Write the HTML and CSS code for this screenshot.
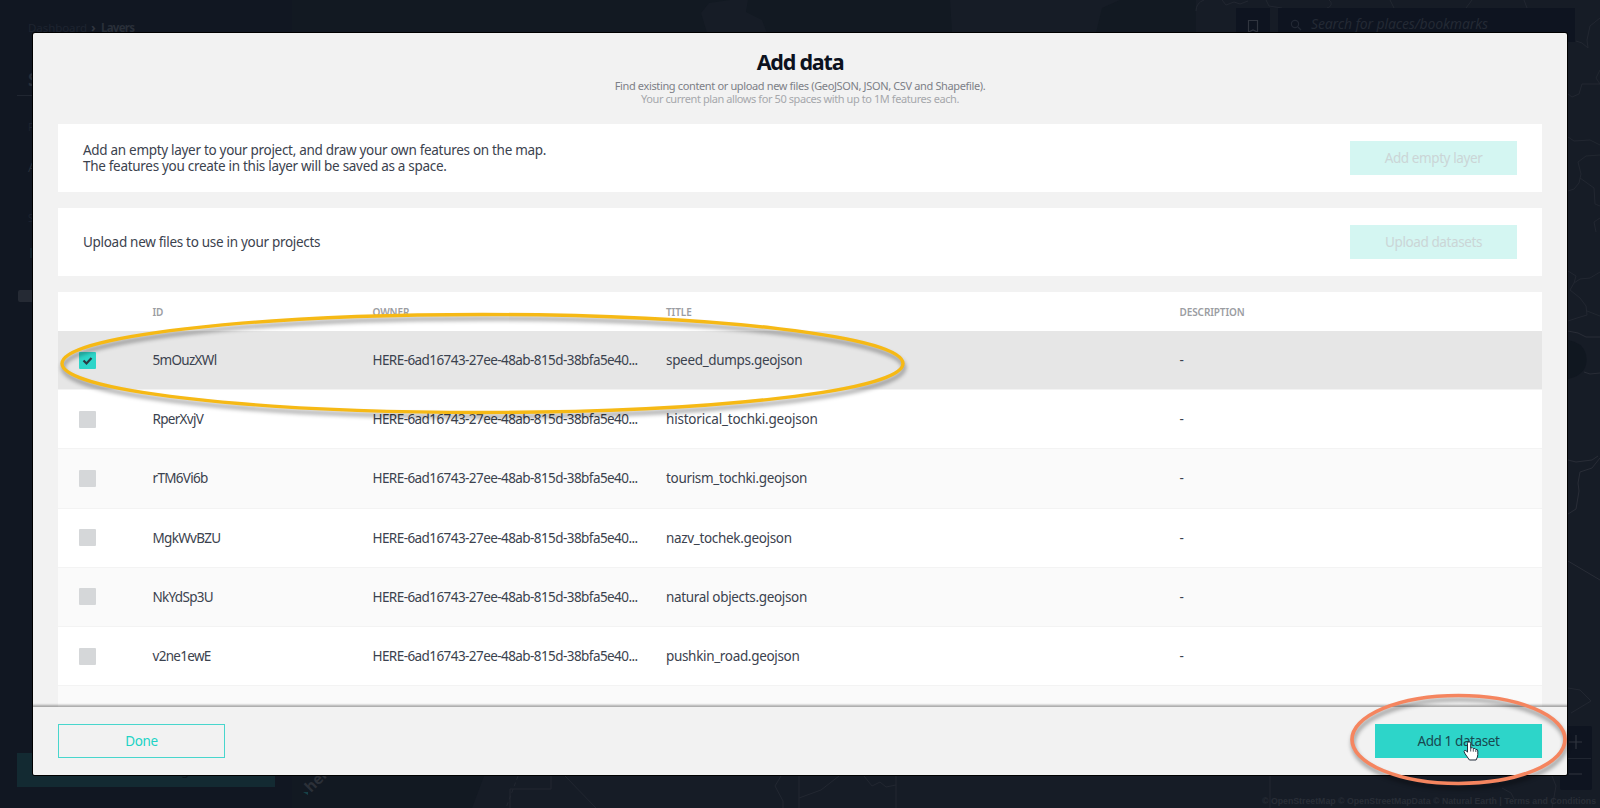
FILE: index.html
```html
<!DOCTYPE html>
<html lang="en">
<head>
<meta charset="utf-8">
<title>Add data</title>
<link rel="stylesheet" href="styles.css">
</head>
<body>
<div class="backdrop">
  <svg class="map" width="1600" height="808" viewBox="0 0 1600 808">
    <rect width="292" height="808" fill="#111722"/>
    <rect x="292" width="1308" height="808" fill="#121922"/>
    <path d="M730 0h18l-2 12 16 8 5 13h-60l-6-20 8-10zM950 0h170l-18 8-6 25H952zM1196 0h404v808H472l12-32h700V33h12z" fill="#161c26"/>
    <path d="M1568 340q14 2 18 14 4 20-18 25z" fill="#101720"/>
    <g fill="none" stroke="#222731" stroke-width="1">
      <path d="M1196 11q0-8 8-11M1222 0l4 5 8-3 6 2 8-3M1266 0l3 6 13 2M1329 0c4 3 2 7-2 8M1390 0l4 8M1472 0l-6 8M1524 0l3 8M1600 18l-10 8-3 14 1 8-6-5-6-2M1600 84l-18 0-3 10-7 3-4-3M1600 70l-4 8 4 6M1568 137l6 4 16-1 10 5M1600 155l-14 1-8 6 3 12-2 9-5 6-6 2M1580 178l14 10 1 16 5 2M1600 218l-6 4 2 10M1568 271l8 5-2 7 6-4 10-1 10-6M1574 283l-4 7 10 8 6 8 1 9-10 3-9 3M1587 311l13 5M1368 664l32 22"/>
      <path stroke="#292d37" d="M1568 331l10 2 8 4 14 0M1584 372l6 2 10-1M1568 460l8 2 16-2 6-4M1600 458l-8 10-12 4-2 11 1 8-3 18-8 5M1568 561l32 19"/>
      <path d="M1568 688l12 2 11 11-20 12M1270 776v32M1502 788l9 5 3 6M1552 776l4 10-4 22"/>
      <path d="M551 776v13h-41v19M565 776l31 32M781 776l-6 10 8 15v7M799 776v32M799 798l22-8 18-14M864 776l8 10 8-4 6 5 10-2M896 776v32"/>
      <path d="M518 776l-12 32" stroke-dasharray="4 3"/>
    </g>
    <g fill="#0e1420"><rect x="1236" y="8" width="34" height="34"/><rect x="1278" y="8" width="297" height="34"/><rect x="1560" y="726" width="32" height="64" rx="2"/></g>
    <g fill="none" stroke="#30353f" stroke-width="1.2"><path d="M1248.500 32V20.500h9V32l-4.500-2z"/><circle cx="1295" cy="24" r="3.600" stroke="#222834"/><path d="M1298 27l3 3" stroke="#222834"/><path d="M1569 742h13M1576 735v14M1569 774h13"/></g>
    <path d="M17 95.500h16M1562 758.500h29" stroke="#202631"/>
    <rect x="17" y="753" width="258" height="34" fill="#132a32"/>
    <path d="M20 290h14v13l-3-1H20q-2 0-2-2v-8q0-2 2-2z" fill="#252a34"/>
    <path d="M31 248v10" stroke="#17303a"/>
    <g class="map-text">
      <text x="28" y="32" font-size="11.500" textLength="59" fill="#1e2430">Dashboard</text>
      <text x="91" y="32" font-size="13" font-weight="700" fill="#30353f">›</text>
      <text x="101" y="32" font-size="11.500" font-weight="700" textLength="34" fill="#292f39">Layers</text>
      <text x="28" y="86" font-size="17" font-weight="700" fill="#292f39">S</text>
      <text x="28" y="131" font-size="10" fill="#1e2430">F</text>
      <text x="28" y="172" font-size="13" fill="#292f39">A</text>
      <text x="28" y="222" font-size="10" fill="#1e2430">S</text>
      <text x="1311" y="29" font-size="14" font-style="italic" textLength="177" fill="#232934">Search for places/bookmarks</text>
      <text x="181" y="775" font-size="13" fill="#0d1a23">g</text>
      <text transform="translate(311 793) rotate(-45)" font-size="15" font-weight="700" fill="#2b3038">here</text>
      <path d="M303 792h5v3z" fill="#174148"/>
      <text class="credits" x="1262" y="804" textLength="334" lengthAdjust="spacingAndGlyphs" font-size="9" fill="#292e37">© OpenStreetMap © OpenStreetMapData © Natural Earth | Terms and Conditions</text>
    </g>
  </svg>
  <main class="dialog">
    <header class="dialog-head">
      <h1>Add data</h1>
      <p class="lead">Find existing content or upload new files (GeoJSON, JSON, CSV and Shapefile).</p>
      <p class="plan">Your current plan allows for 50 spaces with up to 1M features each.</p>
    </header>
    <div class="content">
      <section class="card">
        <p>Add an empty layer to your project, and draw your own features on the map.<br>The features you create in this layer will be saved as a space.</p>
        <button class="btn muted">Add empty layer</button>
      </section>
      <section class="card">
        <p>Upload new files to use in your projects</p>
        <button class="btn muted">Upload datasets</button>
      </section>
      <section class="table">
        <div class="row head"><span></span><span>ID</span><span>OWNER</span><span>TITLE</span><span>DESCRIPTION</span></div>
        <div class="row selected"><span class="check on"><svg width="17" height="17" viewBox="0 0 17 17"><path d="M4.500 8.500l3 3 5-5.500" fill="none" stroke="#2b3a43" stroke-width="2.200"/></svg></span><span class="id">5mOuzXWl</span><span class="owner">HERE-6ad16743-27ee-48ab-815d-38bfa5e40...</span><span>speed_dumps.geojson</span><span>-</span></div>
        <div class="row"><span class="check"></span><span class="id">RperXvjV</span><span class="owner">HERE-6ad16743-27ee-48ab-815d-38bfa5e40...</span><span class="wide">historical_tochki.geojson</span><span>-</span></div>
        <div class="row alt"><span class="check"></span><span class="id">rTM6Vi6b</span><span class="owner">HERE-6ad16743-27ee-48ab-815d-38bfa5e40...</span><span>tourism_tochki.geojson</span><span>-</span></div>
        <div class="row"><span class="check"></span><span class="id">MgkWvBZU</span><span class="owner">HERE-6ad16743-27ee-48ab-815d-38bfa5e40...</span><span>nazv_tochek.geojson</span><span>-</span></div>
        <div class="row alt"><span class="check"></span><span class="id">NkYdSp3U</span><span class="owner">HERE-6ad16743-27ee-48ab-815d-38bfa5e40...</span><span>natural objects.geojson</span><span>-</span></div>
        <div class="row"><span class="check"></span><span class="id">v2ne1ewE</span><span class="owner">HERE-6ad16743-27ee-48ab-815d-38bfa5e40...</span><span>pushkin_road.geojson</span><span>-</span></div>
        <div class="row alt"></div>
      </section>
    </div>
    <footer class="dialog-foot">
      <button class="btn outline">Done</button>
      <button class="btn primary">Add 1 dataset</button>
    </footer>
  </main>
  <svg class="marks" width="1600" height="808" viewBox="0 0 1600 808">
    <ellipse class="mark" cx="482.500" cy="363.500" rx="420.500" ry="49" stroke="#f6b915" stroke-width="3.400"/>
    <ellipse class="mark" cx="1458.500" cy="739.500" rx="106.500" ry="44" stroke="#f5855f" stroke-width="3.700"/>
    <path d="M1467.500 743.500q0-1.800 1.500-1.800t1.700 1.800v4.500q2-1 2.600.6 2-.8 2.500.8 2-.3 2 1.600v3.500q0 2.500-1.700 5.500h-6.700l-4.300-6.200q-1.800-2.600-.6-3.300 1.300-.6 3 1.600z" fill="#fff" stroke="#222c3a" stroke-width="1"/>
    <path d="M1470.700 748v3.500M1473.300 748.700v3M1475.800 749.500v2.500" stroke="#222c3a" stroke-width=".8"/>
  </svg>
</div>
</body>
</html>
```
FILE: styles.css
```css
* { box-sizing: border-box; }
body { margin: 0; font-family: "Noto Sans", sans-serif; font-size: 13.5px; color: #3b424e; overflow: hidden; }
h1, p { margin: 0; }
.backdrop { position: relative; width: 1600px; height: 808px; padding: 33px; background: #111722; overflow: hidden; }
.map, .marks { position: absolute; left: 0; top: 0; pointer-events: none; }
.map-text { font-family: "Noto Sans", sans-serif; }
.credits { font-family: "Liberation Sans", sans-serif; font-weight: 700; }
.mark { fill: none; filter: drop-shadow(1.5px 4px 2px rgba(0, 0, 0, .4)); }
.dialog { position: relative; display: flex; flex-direction: column; width: 1534px; height: 742px; background: #f2f2f2; border-radius: 2px; box-shadow: 0 0 0 1px #000; overflow: hidden; }
.dialog-head { flex-shrink: 0; height: 91px; padding-top: 14px; text-align: center; white-space: nowrap; }
h1 { font-size: 21.5px; line-height: 30px; font-weight: 700; color: #0c121e; letter-spacing: -1.2px; }
.lead, .plan { font-size: 11px; line-height: 13px; }
.lead { color: #7d8087; margin-top: 2px; letter-spacing: -.36px; }
.plan { color: #a6a8ac; letter-spacing: -.42px; }
.content { display: flex; flex-direction: column; gap: 16px; height: 583px; padding: 0 25px; overflow: hidden; }
.card { display: flex; flex-shrink: 0; align-items: center; justify-content: space-between; height: 68px; padding: 0 25px; background: #fff; line-height: 16px; white-space: nowrap; letter-spacing: -.3px; }
.btn { width: 167px; height: 34px; padding: 0; border: 0; font: inherit; letter-spacing: -.4px; white-space: nowrap; }
.muted { background: #d4f6f2; color: #cbd5d6; }
.table { flex-shrink: 0; background: #fff; }
.row { display: grid; grid-template-columns: 94.5px 220px 293.5px 513.5px 1fr; align-items: center; height: 59.200px; padding-right: 20px; border-bottom: 1px solid #f3f3f3; white-space: nowrap; letter-spacing: -.33px; }
.row.head { height: 39px; border-bottom: 0; font-size: 10px; font-weight: 600; color: #9b9da2; letter-spacing: -.1px; }
.row.alt { background: #fafafa; }
.row.selected { background: #e6e6e6; }
.id { letter-spacing: -.7px; }
.owner { letter-spacing: -.57px; }
.wide { letter-spacing: -.2px; }
.check { display: block; width: 17px; height: 17px; margin-left: 21px; border-radius: 1px; background: #d5d7d9; }
.check.on { background: #2dd5c9; }
.check svg { display: block; }
.dialog-foot { position: relative; flex-shrink: 0; display: flex; align-items: center; justify-content: space-between; height: 68px; padding: 0 25px 1px; background: #f2f2f2; box-shadow: 0 -1px 2px 1px rgba(0, 0, 0, .32); }
.outline { border: 1px solid #48d6cd; background: transparent; color: #21d2c5; }
.primary { background: #2dd5c9; color: #184850; }
```
